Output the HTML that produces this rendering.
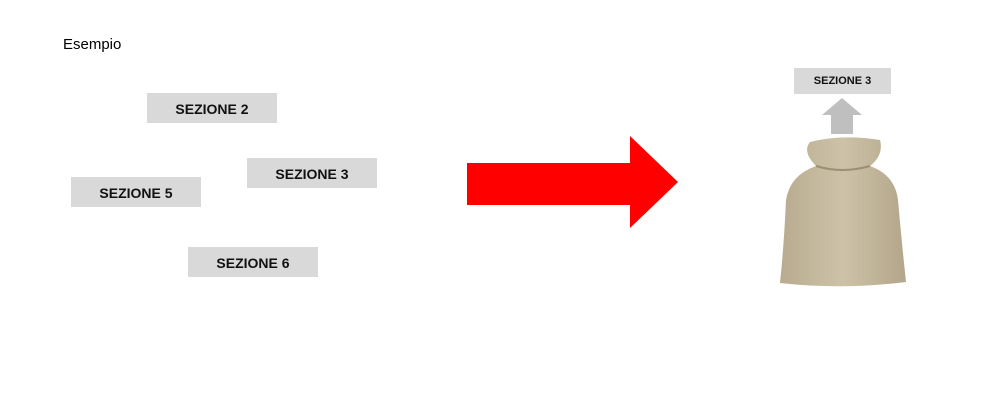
<!DOCTYPE html>
<html><head><style>
body{margin:0;width:995px;height:404px;background:#fff;position:relative;overflow:hidden;font-family:"Liberation Sans",sans-serif}
.l{position:absolute;background:#d9d9d9;width:130px;height:30px;line-height:32px;text-align:center;font-weight:bold;font-size:14px;color:#111}
</style></head><body>
<div style="position:absolute;left:63px;top:36px;font-size:15px">Esempio</div>
<div class="l" style="left:147px;top:93px">SEZIONE 2</div>
<div class="l" style="left:247px;top:158px">SEZIONE 3</div>
<div class="l" style="left:71px;top:177px">SEZIONE 5</div>
<div class="l" style="left:188px;top:247px">SEZIONE 6</div>
<svg style="position:absolute;left:0;top:0" width="995" height="404">
<polygon points="467,163 630,163 630,136 678,182 630,228 630,205 467,205" fill="#ff0000"/>
<polygon points="822,115 842,98 862,115 853,115 853,134 831,134 831,115" fill="#bfbfbf"/>
<defs><linearGradient id="g" x1="0" x2="1"><stop offset="0" stop-color="#b8ab8f"/><stop offset="0.5" stop-color="#cdc2a8"/><stop offset="1" stop-color="#b3a68a"/></linearGradient></defs>
<path d="M810,142 Q842,134 880,140 Q884,155 870,166 Q895,175 898,200 Q902,245 906,282 Q842,290 780,283 Q784,245 786,200 Q790,175 816,166 Q802,152 810,142Z" fill="url(#g)"/>
<path d="M816,166 Q842,174 870,166" stroke="#9c8f74" stroke-width="2" fill="none"/>
</svg>
<div style="position:absolute;left:794px;top:68px;width:97px;height:26px;line-height:27px;background:#d9d9d9;text-align:center;font-weight:bold;font-size:11px;color:#111">SEZIONE 3</div>
</body></html>
